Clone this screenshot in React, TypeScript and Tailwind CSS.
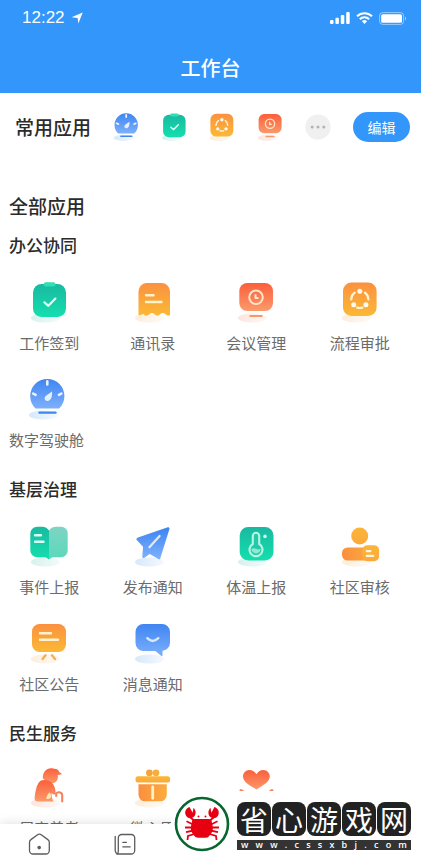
import type { ReactNode } from 'react';

type IconName =
  | 'gauge' | 'checkin' | 'flow' | 'meeting' | 'contacts' | 'book' | 'plane'
  | 'thermo' | 'person' | 'board' | 'message' | 'elder' | 'gift' | 'heart';

type AppItem = { icon: IconName; label?: string };

const shadows: Record<IconName, string> = {
  gauge: 'url(#shadowBlue)',
  checkin: 'url(#shadowGreen)',
  flow: 'url(#shadowOrange)',
  meeting: 'url(#shadowRed)',
  contacts: 'url(#shadowOrange)',
  book: 'url(#shadowGreen)',
  plane: 'url(#shadowBlue)',
  thermo: 'url(#shadowGreen)',
  person: 'url(#shadowOrange)',
  board: 'url(#shadowOrange)',
  message: 'url(#shadowBlue)',
  elder: 'url(#shadowRed)',
  gift: 'url(#shadowOrange)',
  heart: 'url(#shadowRed)',
};

const art: Record<IconName, ReactNode> = {
  gauge: (
    <>
      <path d="M10.5 31.4A17.1 17.1 0 1 1 34.1 31.4Z" fill="url(#blue)" />
      <path d="M22.3 4.4v3M8.200 16.600l2.500 1.200M36.400 16.600l-2.500 1.200" stroke="#eaf3ff" strokeWidth="2.600" strokeLinecap="round" />
      <path d="M27 14.400c.4 4-.4 7.200-2.400 8.800-1.400 1.100-3.600 1-4.500-.3-1-1.500-.4-3.300 1.200-4.500Z" fill="#e3f0ff" />
      <path d="M14.500 35.600h16" stroke="#3f87ea" strokeWidth="2.400" strokeLinecap="round" />
    </>
  ),
  checkin: (
    <>
      <rect x="6" y="4" width="33" height="33" rx="8.500" fill="url(#green)" />
      <rect x="16.700" y="2.200" width="11.800" height="4.400" rx="2" fill="#2fe0b4" />
      <path d="M17.400 22.300l4 3.500 7-7.200" fill="none" stroke="#d8fff3" strokeWidth="2.200" strokeLinecap="round" strokeLinejoin="round" />
    </>
  ),
  flow: (
    <>
      <rect x="5" y="2.500" width="33.600" height="33.600" rx="8.500" fill="url(#orange)" />
      <path d="M16.700 12.600a8.600 8.600 0 0 0-3.500 6.800M26.900 12.600a8.600 8.600 0 0 1 3.500 6.800M19.200 27.600a9 9 0 0 0 5.200 0" fill="none" stroke="#fff4d6" strokeWidth="2.200" strokeLinecap="round" />
      <circle cx="21.800" cy="11.300" r="2.500" fill="#fffaf0" />
      <circle cx="15.700" cy="24.700" r="2.500" fill="#fffaf0" />
      <circle cx="27.900" cy="24.700" r="2.500" fill="#fffaf0" />
    </>
  ),
  meeting: (
    <>
      <rect x="5.300" y="3" width="33.700" height="28" rx="8" fill="url(#red)" />
      <circle cx="22" cy="17.300" r="6.800" fill="none" stroke="#ffe4c8" strokeWidth="2" />
      <path d="M21.500 14.200v3.900h3" fill="none" stroke="#ffe9d4" strokeWidth="2" strokeLinejoin="round" />
      <path d="M16.300 36h11.400" stroke="#f8976c" strokeWidth="2.200" strokeLinecap="round" />
    </>
  ),
  contacts: (
    <>
      <path d="M7.500 11.500A8.500 8.500 0 0 1 16 3h14.500A8.500 8.500 0 0 1 39 11.500V35c-2 1.400-3.300.4-4.500-.8-1.700-1.700-3.700-1.600-5.300 0-1.900 1.900-3.900 1.900-5.700 0-1.600-1.600-3.500-1.600-5.100 0-1.800 1.900-3.700 1.900-5.500.2-1.400-1.400-3.200 1.900-5.400.6Z" fill="url(#orange)" />
      <path d="M15 15.300h7.500M15 22h15.500" stroke="#fff3d0" strokeWidth="2.400" strokeLinecap="round" />
    </>
  ),
  book: (
    <>
      <path d="M22 6.500C23.500 4 26 2.700 29 2.700h5a6.500 6.500 0 0 1 6.700 6.500v17.500a6.500 6.500 0 0 1-6.500 6.500h-6.500c-2.500 0-4 .6-5.700 2.200Z" fill="url(#mint)" />
      <path d="M22 6.500C20.500 4 18 2.700 15.500 2.700h-5.200a7 7 0 0 0-7 7v16.500a7 7 0 0 0 7 7h6c2.500 0 4 .6 5.700 2.200Z" fill="url(#green)" />
      <path d="M8 11.300h6M8 17.700h8.500" stroke="#d8fff3" strokeWidth="2.400" strokeLinecap="round" />
    </>
  ),
  plane: (
    <>
      <path d="M37.200 4.600 28 34l-9.400-5.500-6 4.200.8-10.200-6.700-7.400Z" fill="url(#blue)" stroke="url(#blue)" strokeWidth="2.600" strokeLinejoin="round" />
      <path d="M28.600 12 18.400 23.300" stroke="#dcebff" strokeWidth="2.200" strokeLinecap="round" />
    </>
  ),
  thermo: (
    <>
      <rect x="5.700" y="3" width="33.800" height="33.600" rx="8.500" fill="url(#green)" />
      <path d="M18.800 20v-8a3.200 3.200 0 0 1 6.400 0v8a6.500 6.500 0 1 1-6.400 0Z" fill="#23c9a8" stroke="#b8f5e3" strokeWidth="2.100" />
      <path d="M17.300 24.800q2.300-1.300 4.700 0t4.700 0a4.700 4.700 0 1 1-9.400 0Z" fill="#8eead2" />
      <circle cx="31" cy="12.400" r="1.800" fill="#c8f8ea" />
    </>
  ),
  person: (
    <>
      <circle cx="21.700" cy="12" r="8.500" fill="url(#yellow)" />
      <rect x="4" y="23.500" width="32" height="13" rx="5.500" fill="url(#orangeFlat)" />
      <rect x="24.300" y="21.300" width="16.800" height="16" rx="5" fill="url(#yellow)" />
      <path d="M28.800 27.200h3.500M28.800 31.900h6.500" stroke="#fff8e0" strokeWidth="2.200" strokeLinecap="round" />
    </>
  ),
  board: (
    <>
      <rect x="5" y="3" width="34" height="28" rx="7.500" fill="url(#orange)" />
      <path d="M13 12.300h11M13 18.700h18" stroke="#fff3d0" strokeWidth="2.400" strokeLinecap="round" />
      <path d="M18.500 34.300 15.600 38M25 34.300l3 3.700" stroke="#fbae4c" strokeWidth="2.400" strokeLinecap="round" />
    </>
  ),
  message: (
    <>
      <path d="M12.500 3h18.500a8 8 0 0 1 8 8v11a8 8 0 0 1-7.500 7.800v4.400c0 1-.8 1.200-1.500.6L24.500 30h-12a8 8 0 0 1-8-8V11a8 8 0 0 1 8-8Z" fill="url(#blue)" />
      <path d="M16.300 17.200q5.300 5.400 11 0" fill="none" stroke="#d8e8ff" strokeWidth="2.400" strokeLinecap="round" />
    </>
  ),
  elder: (
    <>
      <path d="M15.800 13.500c-.3-5.700 3-10.200 8.500-10.300 1.400-.1 2 .5 3.300.5 2.600.1 4.200 1.400 4.600 3.400l2.200 1.300c.6.400.3 1.200-.4 1.200l-3.300.3c.9 4.500-1.500 7.900-5.200 8.400-2 .2-4-.3-5.400-1.500Z" fill="url(#red)" />
      <path d="M13.500 15.700c3.600-1.400 8.500-.6 11.200 1.800 2.200 2 3.300 4.800 3.800 8.700l-1.200 3.500c-1.200-.3-2-1.100-2.600-2.200-.4 2.600.2 6.200 1.900 9H11c-2.600 0-3.700-1.300-3.400-3.900.8-7.200 2.300-14 5.900-16.900Z" fill="url(#red)" />
      <path d="M22.800 27.200c-1.900 1.400-3.200 3.700-3.600 6.800 2.200.3 4.200-.3 5-1.700.3-1.600-.2-3.400-1.400-5.100Z" fill="#ffe3b0" />
      <path d="M25 24.500c.8 2.700 2 4 4.200 4.300M29.200 31v-2c.2-2.600 6-2.500 6 1.500V36.500" fill="none" stroke="#f8835d" strokeWidth="2.100" strokeLinecap="round" />
    </>
  ),
  gift: (
    <>
      <circle cx="18.400" cy="7.800" r="3.400" fill="#f7a33a" />
      <circle cx="25" cy="7.800" r="3.400" fill="#f8ad3c" />
      <rect x="4.500" y="11.200" width="34.600" height="6.400" rx="2.500" fill="url(#yellow)" />
      <path d="M7.500 19.300h28.300v10.500a6.500 6.500 0 0 1-6.500 6.500H14a6.500 6.500 0 0 1-6.500-6.500Z" fill="url(#orangeFlat)" />
      <path d="M21.700 21.800v11.500" stroke="#fff1c9" strokeWidth="2.800" strokeLinecap="round" />
    </>
  ),
  heart: (
    <>
      <path d="M22.400 24.600C16 20.500 9 17 9 11.500 9 8 11.700 5 15.300 5c3 0 5.500 1.500 7.100 4.300C24 6.500 26.600 5 29.500 5c3.600 0 6.300 3 6.300 6.500 0 5.500-7 9-13.400 13.100Z" fill="url(#red)" />
      <path d="M7 25.500l15.500 11 15.500-11" fill="none" stroke="#f9875f" strokeWidth="3" strokeLinecap="round" />
    </>
  ),
};

function AppIcon({ name, className }: { name: IconName; className: string }) {
  return (
    <svg viewBox="0 0 44 44" className={className} aria-hidden="true">
      <ellipse cx="18.500" cy="38" rx="14.500" ry="4.500" fill={shadows[name]} />
      {art[name]}
    </svg>
  );
}

function Gradient({ id, from, to, flat }: { id: string; from: string; to: string; flat?: boolean }) {
  return (
    <linearGradient id={id} x1="0" y1="0" x2={flat ? '1' : '0'} y2={flat ? '0' : '1'}>
      <stop offset="0" stopColor={from} />
      <stop offset="1" stopColor={to} />
    </linearGradient>
  );
}

function IconDefs() {
  return (
    <svg width="0" height="0" className="absolute" aria-hidden="true">
      <defs>
        <Gradient id="blue" from="#3f85f2" to="#7db0fb" />
        <Gradient id="green" from="#19b9a0" to="#14dfae" />
        <Gradient id="mint" from="#7fd4c3" to="#5ad9bb" />
        <Gradient id="orange" from="#fb9140" to="#fbb935" />
        <Gradient id="orangeFlat" from="#fa8f3f" to="#fbac3e" flat />
        <Gradient id="yellow" from="#fab638" to="#fba93a" />
        <Gradient id="red" from="#fb5f3b" to="#fb9a6b" />
        <Gradient id="shadowBlue" from="#d6e8fc" to="#f5f9fe" flat />
        <Gradient id="shadowGreen" from="#d6f1ed" to="#f3fbf9" flat />
        <Gradient id="shadowOrange" from="#fdeedd" to="#fef9f4" flat />
        <Gradient id="shadowRed" from="#fce5dd" to="#fef8f5" flat />
      </defs>
    </svg>
  );
}

const favourites: IconName[] = ['gauge', 'checkin', 'flow', 'meeting'];

const office: AppItem[] = [
  { icon: 'checkin', label: '工作签到' },
  { icon: 'contacts', label: '通讯录' },
  { icon: 'meeting', label: '会议管理' },
  { icon: 'flow', label: '流程审批' },
];

const governance: AppItem[] = [
  { icon: 'book', label: '事件上报' },
  { icon: 'plane', label: '发布通知' },
  { icon: 'thermo', label: '体温上报' },
  { icon: 'person', label: '社区审核' },
  { icon: 'board', label: '社区公告' },
  { icon: 'message', label: '消息通知' },
];

const livelihood: AppItem[] = [
  { icon: 'elder', label: '居家养老' },
  { icon: 'gift', label: '微心愿' },
  { icon: 'heart' },
];

function AppTile({ icon, label }: AppItem) {
  return (
    <button type="button" className="flex flex-col items-center gap-[7px]" aria-label={label ?? icon}>
      <AppIcon name={icon} className="size-11" />
      <span className="h-6 text-[15px] leading-6 whitespace-nowrap text-[#6b6b6b]">{label}</span>
    </button>
  );
}

function AppGrid({ items }: { items: AppItem[] }) {
  return (
    <div className="grid grid-cols-4 gap-x-[45px] gap-y-[22px] pr-8 pl-5">
      {items.map((item) => (
        <AppTile key={item.icon} {...item} />
      ))}
    </div>
  );
}

function SectionTitle({ children }: { children: ReactNode }) {
  return <h3 className="px-[9px] text-[17px] leading-6 font-medium text-[#2b2b2b]">{children}</h3>;
}

function StatusBar() {
  return (
    <div className="flex h-9 items-center justify-between pr-[14px] pl-[22px]">
      <div className="flex items-center gap-[6px]">
        <span className="font-['Liberation_Sans',sans-serif] text-[17px] leading-5">12:22</span>
        <svg viewBox="0 0 12 12" className="size-3" fill="currentColor" aria-hidden="true">
          <path d="M11.700.4 7.400 11.600 6.600 5.900.5 5.200Z" />
        </svg>
      </div>
      <div className="flex items-center gap-[6px]">
        <svg viewBox="0 0 20 12" className="h-3 w-5" fill="currentColor" aria-hidden="true">
          <rect x="0" y="8" width="3.500" height="4" rx="1" />
          <rect x="5.400" y="5.800" width="3.500" height="6.200" rx="1" />
          <rect x="10.800" y="3" width="3.500" height="9" rx="1" />
          <rect x="16.200" y="0" width="3.500" height="12" rx="1" />
        </svg>
        <svg viewBox="0 0 17 12" className="h-3 w-[17px]" fill="none" stroke="currentColor" strokeWidth="2.200" aria-hidden="true">
          <path d="M1 4.300a10.800 10.800 0 0 1 15 0M3.800 7.200a6.700 6.700 0 0 1 9.400 0" />
          <path d="M8.500 12 5.900 9.300a3.800 3.800 0 0 1 5.200 0Z" fill="currentColor" stroke="none" />
        </svg>
        <svg viewBox="0 0 28 13" className="h-[13px] w-7" fill="none" aria-hidden="true">
          <rect x=".6" y=".6" width="24" height="11.800" rx="3.200" stroke="#fff" strokeOpacity=".5" />
          <rect x="2.200" y="2.200" width="20.800" height="8.600" rx="1.600" fill="#fff" />
          <path d="M26 4.500c1.500.7 1.500 3.300 0 4Z" fill="#fff" fillOpacity=".5" />
        </svg>
      </div>
    </div>
  );
}

function TabBar() {
  return (
    <nav className="relative flex h-8 flex-none gap-16 bg-white pt-[9px] pl-7 text-[#5c5c5c] shadow-[0_-2px_10px_rgba(0,0,0,0.10)]">
      <button type="button" aria-label="首页" className="h-[22px]">
        <svg viewBox="0 0 22 22" className="size-[22px]" fill="none" stroke="currentColor" strokeWidth="1.300" aria-hidden="true">
          <path d="M9.200 1.900 2.900 6.600A3.300 3.300 0 0 0 1.500 9.300v8.200a3.500 3.500 0 0 0 3.500 3.500h12.800a3.500 3.500 0 0 0 3.500-3.500V9.300a3.300 3.300 0 0 0-1.400-2.700l-6.300-4.700a3.700 3.700 0 0 0-4.400 0Z" />
          <circle cx="11.200" cy="14.600" r="1.800" fill="currentColor" stroke="none" />
        </svg>
      </button>
      <button type="button" aria-label="资讯" className="h-[22px]">
        <svg viewBox="0 0 22 22" className="size-[22px]" fill="none" stroke="currentColor" strokeWidth="1.300" strokeLinecap="round" aria-hidden="true">
          <path d="M1.200 3.500v14A3.500 3.500 0 0 0 4.700 21h12.500a3.500 3.500 0 0 0 3.500-3.500V5a3.500 3.500 0 0 0-3.500-3.500H7.800A3.500 3.500 0 0 0 4.300 5v12.500c0 2-.6 3.500-1.500 3.500M8.800 9.300h3.600M8.800 13.800h7.400" />
        </svg>
      </button>
    </nav>
  );
}

function CrabLogo() {
  return (
    <svg viewBox="0 0 56 56" className="size-14 flex-none" aria-hidden="true">
      <circle cx="28" cy="28" r="26" fill="#fff" stroke="#07662d" strokeWidth="2.600" />
      <g fill="#e60012">
        <path d="M18 25.500Q18 23 21 23h13.500q3 0 3.200 2.500l1.200 6c.2 3-1.400 6.500-4.400 9.300-.7.700-1.500.900-2.500.900h-8.300c-1 0-1.800-.200-2.500-.900-3-2.800-4.600-6.300-4.400-9.300Z" />
        <path d="M15.500 11c-3.300 1.200-5 4.200-4 7.400.8 2.600 3.100 4.100 5.700 3.700 2.900-.4 4.800-3 4.300-6.500-.3-1.700-1-2.900-2-3.600l-.9 4.700Z" />
        <path d="M40.500 11c3.300 1.200 5 4.200 4 7.400-.8 2.600-3.100 4.100-5.700 3.700-2.900-.4-4.800-3-4.300-6.500.3-1.700 1-2.900 2-3.600l.9 4.700Z" />
        <circle cx="24.500" cy="20.600" r="1" />
        <circle cx="31.500" cy="20.600" r="1" />
      </g>
      <path
        d="M16 21l4 3.500M40 21l-4 3.500M19 28.500l-6.500-3.200M37 28.500l6.500-3.200M19 31.500h-8M37 31.500h8M19.500 34.500l-7.500 1.700M36.500 34.500l7.500 1.700M20.500 38l-6.500 2-.5 4M35.500 38l6.500 2 .5 4"
        fill="none"
        stroke="#e60012"
        strokeWidth="1.800"
      />
    </svg>
  );
}

function SiteBadge() {
  return (
    <div className="absolute right-0 bottom-0 flex h-[65px] w-[250px] items-center gap-[7px] bg-white pr-[10px] pl-[3px]">
      <CrabLogo />
      <div className="flex-1 pt-1">
        <div className="flex justify-between">
          {['省', '心', '游', '戏', '网'].map((char) => (
            <span
              key={char}
              className="flex h-[34px] w-[34px] items-center justify-center rounded-lg bg-[#222] text-[28px] leading-8 text-white"
            >
              {char}
            </span>
          ))}
        </div>
        <div className="mt-1 flex h-[10px] items-center justify-between bg-[#333] px-1 font-['Open_Sans',sans-serif] text-[9px] leading-[10px] font-semibold text-white">
          {'www.cssxbj.com'.split('').map((char, i) => (
            <span key={i}>{char}</span>
          ))}
        </div>
      </div>
    </div>
  );
}

export default function App() {
  return (
    <div className="relative flex h-screen flex-col overflow-hidden bg-white font-['Noto_Sans_CJK_SC',sans-serif]">
      <IconDefs />

      <header className="flex-none bg-[#3296fa] text-white">
        <StatusBar />
        <h1 className="pt-[18px] pb-[11px] text-center text-[20px] leading-7 font-medium">工作台</h1>
      </header>

      <main className="min-h-0 flex-1 overflow-hidden">
        {/* Favourites */}
        <section className="flex items-center justify-between pt-[19px] pr-[11px] pl-[15px]">
          <h2 className="text-[19px] leading-7 font-medium text-[#2b2b2b]">常用应用</h2>
          <div className="flex items-center gap-[18px]">
            {favourites.map((name) => (
              <button key={name} type="button" aria-label={name} className="size-[30px]">
                <AppIcon name={name} className="size-[30px]" />
              </button>
            ))}
            <button type="button" aria-label="更多" className="size-[30px]">
              <svg viewBox="0 0 30 30" className="size-[30px]" aria-hidden="true">
                <circle cx="15" cy="15" r="12.600" fill="#f0f0f0" />
                <circle cx="9.200" cy="15" r="1.500" fill="#b4b4b4" />
                <circle cx="15" cy="15" r="1.500" fill="#b4b4b4" />
                <circle cx="20.800" cy="15" r="1.500" fill="#b4b4b4" />
              </svg>
            </button>
          </div>
          <button type="button" className="h-[30px] w-[57px] rounded-full bg-[#3296fa] text-[14px] leading-5 text-white">
            编辑
          </button>
        </section>

        <h2 className="mt-[50px] px-[9px] text-[19px] leading-7 font-medium text-[#2b2b2b]">全部应用</h2>

        <section className="mt-[13px] flex flex-col gap-[23px]">
          <SectionTitle>办公协同</SectionTitle>
          <div className="flex flex-col gap-[22px]">
            <AppGrid items={office} />
            <div className="flex px-[9px]">
              <AppTile icon="gauge" label="数字驾驶舱" />
            </div>
          </div>
        </section>

        <section className="mt-[25px] flex flex-col gap-[23px]">
          <SectionTitle>基层治理</SectionTitle>
          <AppGrid items={governance} />
        </section>

        <section className="mt-[25px] flex flex-col gap-5">
          <SectionTitle>民生服务</SectionTitle>
          <AppGrid items={livelihood} />
        </section>
      </main>

      <TabBar />
      <SiteBadge />
    </div>
  );
}
